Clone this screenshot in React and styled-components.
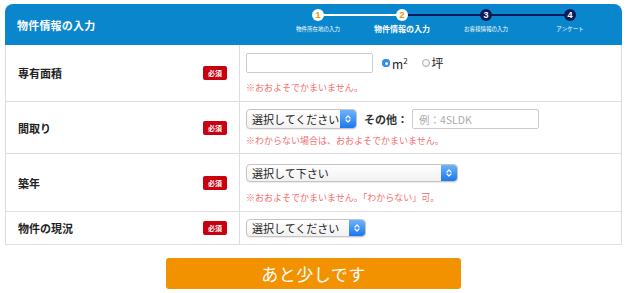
import React from "react";
import styled, { createGlobalStyle } from "styled-components";

const Global = createGlobalStyle`
  html, body { margin: 0; padding: 0; background: #fff; }
  body { font-family: "Noto Sans CJK JP", "Noto Sans", sans-serif; color: #222; }
  * { box-sizing: border-box; }
`;

const Page = styled.div`
  width: 630px;
  padding: 4px 8px 0 5px;
`;

const Header = styled.div`
  height: 41px;
  background: #0a87cc;
  border-radius: 8px 8px 0 0;
  display: flex;
  align-items: center;
  padding: 0 10px 0 12px;
`;

const Title = styled.h1`
  margin: 0;
  font-size: 11px;
  font-weight: 700;
  color: #fff;
  letter-spacing: 0.2px;
`;

const Steps = styled.ol`
  margin: 0 0 0 auto;
  padding: 0;
  list-style: none;
  display: flex;
  align-self: stretch;
`;

const Step = styled.li`
  position: relative;
  width: 84px;
  display: flex;
  flex-direction: column;
  align-items: center;
  padding-top: 5px;
  &::after {
    content: "";
    display: ${(p) => (p.$last ? "none" : "block")};
    position: absolute;
    left: 50%;
    width: 100%;
    top: 10px;
    height: 2px;
    background: ${(p) => (p.$lineDone ? "#fff" : "#0d1b5c")};
    z-index: 0;
  }
`;

const Dot = styled.span`
  position: relative;
  z-index: 1;
  width: 12px;
  height: 12px;
  border-radius: 50%;
  background: ${(p) => (p.$done ? "#fff" : "#0d1b5c")};
  color: ${(p) => (p.$done ? "#f39200" : "#fff")};
  font-family: "Liberation Sans", Arial, sans-serif;
  font-size: 9px;
  font-weight: 700;
  display: flex;
  align-items: center;
  justify-content: center;
  line-height: 1;
`;

const StepLabel = styled.span`
  margin-top: ${(p) => (p.$active ? "4px" : "6px")};
  font-size: ${(p) => (p.$active ? "8px" : "5.5px")};
  font-weight: ${(p) => (p.$active ? 700 : 400)};
  color: #fff;
  white-space: nowrap;
  line-height: 1;
`;

const Table = styled.div`
  border: 1px solid #ddd;
  border-top: none;
`;

const Row = styled.div`
  display: grid;
  grid-template-columns: 234px 1fr;
  border-bottom: ${(p) => (p.$last ? "none" : "1px solid #ddd")};
`;

const LabelCell = styled.div`
  display: flex;
  align-items: center;
  justify-content: space-between;
  padding: 0 12px 0 12px;
  border-right: 1px solid #ddd;
`;

const Label = styled.span`
  font-size: 11px;
  font-weight: 700;
  color: #222;
`;

const Badge = styled.span`
  width: 24px;
  height: 14px;
  border-radius: 2px;
  background: #c8000f;
  color: #fff;
  font-size: 7px;
  font-weight: 700;
  display: flex;
  align-items: center;
  justify-content: center;
`;

const FieldCell = styled.div`
  display: flex;
  flex-direction: column;
  align-items: flex-start;
  gap: ${(p) => p.$gap || 0}px;
  padding: ${(p) => p.$pt || 8}px 6px ${(p) => p.$pb || 7}px 6px;
`;

const Line = styled.div`
  display: flex;
  align-items: center;
`;

const TextInput = styled.div`
  width: ${(p) => p.$w}px;
  height: 20px;
  border: 1px solid #ccc;
  border-radius: 2px;
  background: #fff;
  font-size: 10.5px;
  color: #aaa;
  display: flex;
  align-items: center;
  padding-left: 6px;
  margin-left: ${(p) => p.$ml || 0}px;
`;

const Radio = styled.span`
  width: 8px;
  height: 8px;
  border-radius: 50%;
  margin-left: ${(p) => p.$ml}px;
  ${(p) =>
    p.$on
      ? `background: #1f7ff0; box-shadow: inset 0 0 0 2px #3b8ff2; display:flex; align-items:center; justify-content:center;
         &::after { content: ""; width: 3px; height: 3px; border-radius: 50%; background: #fff; }`
      : `background: linear-gradient(#fff, #eee); border: 1px solid #aaa;`}
`;

const Unit = styled.span`
  font-size: 12px;
  color: #222;
  margin-left: 2px;
  line-height: 1;
  sup { font-size: 8px; vertical-align: 5px; }
`;

const Note = styled.div`
  font-size: 9px;
  color: #f46f6f;
  line-height: 12px;
  white-space: nowrap;
`;

const SelectBox = styled.div`
  width: ${(p) => p.$w}px;
  height: ${(p) => p.$h || 19}px;
  border: 1px solid #c4c4c4;
  border-radius: 4px;
  background: linear-gradient(#fff, #f1f1f1);
  display: flex;
  align-items: stretch;
  overflow: hidden;
  box-shadow: 0 1px 1px rgba(0, 0, 0, 0.08);
`;

const SelectText = styled.span`
  flex: 1;
  font-size: 11px;
  color: #222;
  display: flex;
  align-items: center;
  padding-left: 5px;
  white-space: nowrap;
  overflow: hidden;
`;

const Stepper = styled.span`
  width: 16px;
  background: linear-gradient(#6cb3fa, #1a78ef);
  display: flex;
  align-items: center;
  justify-content: center;
  border-radius: 0 3px 3px 0;
`;

const Other = styled.span`
  font-size: 11px;
  font-weight: 700;
  color: #333;
  margin-left: 7px;
  white-space: nowrap;
`;

const ButtonWrap = styled.div`
  display: flex;
  justify-content: center;
  padding-top: 13px;
`;

const Submit = styled.button`
  width: 295px;
  height: 31px;
  border: none;
  border-radius: 3px;
  background: #f39200;
  color: #fff;
  font-family: "Noto Sans CJK JP", sans-serif;
  font-size: 17px;
  letter-spacing: 0.5px;
  cursor: pointer;
  display: flex;
  align-items: center;
  justify-content: center;
`;

const Arrows = () => (
  <svg width="8" height="10" viewBox="0 0 8 10">
    <path d="M2 4 L4 2 L6 4 M2 6 L4 8 L6 6" fill="none" stroke="#fff" strokeWidth="1.2" strokeLinecap="round" strokeLinejoin="round" />
  </svg>
);

const Select = ({ w, h, children }) => (
  <SelectBox $w={w} $h={h}>
    <SelectText>{children}</SelectText>
    <Stepper>
      <Arrows />
    </Stepper>
  </SelectBox>
);

const steps = [
  { n: 1, label: "物件所在地の入力", done: true, lineDone: true },
  { n: 2, label: "物件情報の入力", done: true, active: true },
  { n: 3, label: "お客様情報の入力" },
  { n: 4, label: "アンケート", last: true },
];

export default function App() {
  return (
    <>
      <Global />
      <Page>
        <Header>
          <Title>物件情報の入力</Title>
          <Steps>
            {steps.map((s) => (
              <Step key={s.n} $last={s.last} $lineDone={s.lineDone}>
                <Dot $done={s.done}>{s.n}</Dot>
                <StepLabel $active={s.active}>{s.label}</StepLabel>
              </Step>
            ))}
          </Steps>
        </Header>
        <Table>
          <Row>
            <LabelCell>
              <Label>専有面積</Label>
              <Badge>必須</Badge>
            </LabelCell>
            <FieldCell $pt={8} $gap={9} $pb={7}>
              <Line>
                <TextInput $w={127} />
                <Radio $on $ml={9} />
                <Unit>
                  m<sup>2</sup>
                </Unit>
                <Radio $ml={14} />
                <Unit>坪</Unit>
              </Line>
              <Note>※おおよそでかまいません。</Note>
            </FieldCell>
          </Row>
          <Row>
            <LabelCell>
              <Label>間取り</Label>
              <Badge>必須</Badge>
            </LabelCell>
            <FieldCell $pt={7} $gap={6} $pb={6}>
              <Line>
                <Select w={111} h={20}>選択してください</Select>
                <Other>その他：</Other>
                <TextInput $w={127} $ml={4}>例：4SLDK</TextInput>
              </Line>
              <Note>※わからない場合は、おおよそでかまいません。</Note>
            </FieldCell>
          </Row>
          <Row>
            <LabelCell>
              <Label>築年</Label>
              <Badge>必須</Badge>
            </LabelCell>
            <FieldCell $pt={10} $gap={10} $pb={7}>
              <Select w={212} h={18}>選択して下さい</Select>
              <Note>※おおよそでかまいません。「わからない」可。</Note>
            </FieldCell>
          </Row>
          <Row $last>
            <LabelCell>
              <Label>物件の現況</Label>
              <Badge>必須</Badge>
            </LabelCell>
            <FieldCell $pt={7} $gap={0} $pb={7}>
              <Select w={120} h={18}>選択してください</Select>
            </FieldCell>
          </Row>
        </Table>
        <ButtonWrap>
          <Submit type="button">あと少しです</Submit>
        </ButtonWrap>
      </Page>
    </>
  );
}
